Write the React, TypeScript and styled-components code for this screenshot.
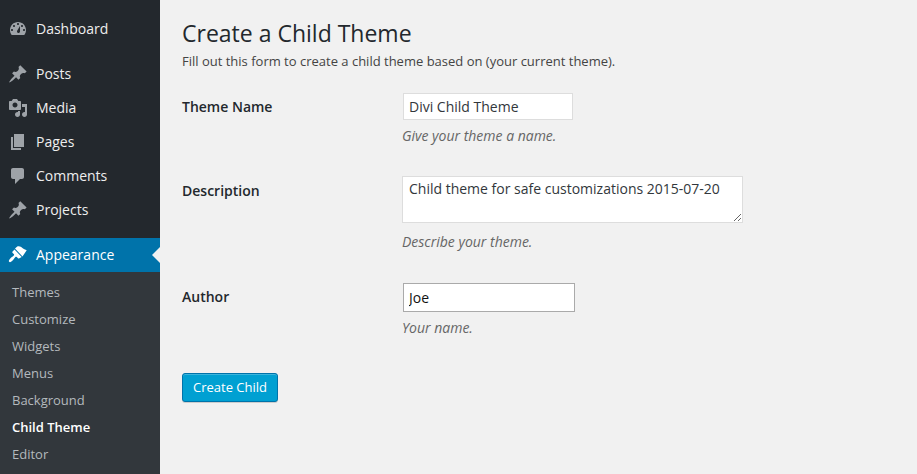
import {createGlobalStyle} from 'styled-components';
import styled from 'styled-components';

const GlobalStyle = createGlobalStyle`
  html, body {
    margin: 0;
    height: 100%;
    overflow: hidden;
    background: #f1f1f1;
    font-family: 'Open Sans', sans-serif;
  }
`;

const Page = styled.div`
  display: flex;
  width: 917px;
  height: 474px;
  overflow: hidden;
`;

const Sidebar = styled.nav`
  width: 160px;
  flex: none;
  background: #23282d;
  padding-top: 12px;
  box-sizing: border-box;
`;

const MenuItem = styled.div<{$gapAfter?: number; $current?: boolean}>`
  position: relative;
  display: flex;
  align-items: center;
  height: 34px;
  margin-bottom: ${({$gapAfter}) => $gapAfter ?? 0}px;
  padding-left: 8px;
  font-size: 14px;
  color: ${({$current}) => ($current ? '#fff' : '#eee')};
  background: ${({$current}) => ($current ? '#0073aa' : 'transparent')};
`;

const MenuIcon = styled.svg<{$current?: boolean}>`
  width: 20px;
  height: 20px;
  margin-right: 8px;
  fill: ${({$current}) => ($current ? '#fff' : '#9ea3a8')};
`;

const MenuLabel = styled.span`
  padding-bottom: 2px;
`;

const Arrow = styled.span`
  position: absolute;
  right: 0;
  top: 9px;
  border: 8px solid transparent;
  border-right-color: #f1f1f1;
  border-left-width: 0;
`;

const SubMenu = styled.div`
  background: #32373c;
  padding: 7px 0 0 12px;
  height: 202px;
`;

const SubItem = styled.div<{$active?: boolean}>`
  height: 27px;
  line-height: 27px;
  font-size: 13px;
  font-weight: ${({$active}) => ($active ? 600 : 400)};
  color: ${({$active}) => ($active ? '#fff' : '#b4b9be')};
`;

const Main = styled.main`
  flex: 1;
  padding: 17px 0 0 22px;
`;

const Title = styled.h1`
  margin: 0;
  font-size: 23px;
  font-weight: 400;
  line-height: 32px;
  color: #23282d;
`;

const Intro = styled.p`
  margin: 3px 0 0;
  font-size: 13px;
  line-height: 18px;
  color: #444;
`;

const FormRow = styled.div<{$height: number}>`
  display: grid;
  grid-template-columns: 220px 1fr;
  height: ${({$height}) => $height}px;
`;

const Fields = styled.div`
  margin-top: 23px;
`;

const Label = styled.label<{$top: number}>`
  padding-top: ${({$top}) => $top}px;
  font-size: 14px;
  font-weight: 600;
  line-height: 20px;
  color: #23282d;
`;

const TextInput = styled.input<{$width: number; $focus?: boolean}>`
  display: block;
  box-sizing: border-box;
  width: ${({$width}) => $width}px;
  height: ${({$focus}) => ($focus ? 29 : 27)}px;
  margin-left: 1px;
  padding: 0 5px;
  border: 1px solid ${({$focus}) => ($focus ? '#aaa' : '#ddd')};
  border-radius: 0;
  outline: none;
  background: #fff;
  font-family: inherit;
  font-size: 14px;
  color: ${({$focus}) => ($focus ? '#111' : '#32373c')};
`;

const TextArea = styled.textarea`
  display: block;
  box-sizing: border-box;
  width: 341px;
  height: 47px;
  padding: 2px 6px;
  border: 1px solid #ddd;
  outline: none;
  background: #fff;
  font-family: inherit;
  font-size: 14px;
  line-height: 20px;
  color: #32373c;
`;

const Hint = styled.p<{$top: number}>`
  margin: ${({$top}) => $top}px 0 0;
  font-size: 14px;
  font-style: italic;
  line-height: 20px;
  color: #666;
`;

const Submit = styled.button`
  display: block;
  box-sizing: border-box;
  width: 96px;
  height: 29px;
  padding: 0 0 2px;
  border: 1px solid #0073aa;
  border-radius: 3px;
  background: #00a0d2;
  box-shadow: inset 0 1px 0 rgba(120, 200, 230, 0.5), 0 1px 0 rgba(0, 0, 0, 0.15);
  font-family: inherit;
  font-size: 13px;
  color: #fff;
`;

const icons: Record<string, string> = {
  dashboard:
    'M3.76 16h12.48c1.1-1.37 1.76-3.11 1.76-5 0-4.42-3.58-8-8-8s-8 3.58-8 8c0 1.89.66 3.63 1.76 5zM10 4c.55 0 1 .45 1 1s-.45 1-1 1-1-.45-1-1 .45-1 1-1zM6 6c.55 0 1 .45 1 1s-.45 1-1 1-1-.45-1-1 .45-1 1-1zm8 0c.55 0 1 .45 1 1s-.45 1-1 1-1-.45-1-1 .45-1 1-1zM9 12l3-5v5.5c0 .8-.7 1.5-1.5 1.5S9 13.3 9 12.5zM4 10c.55 0 1 .45 1 1s-.45 1-1 1-1-.45-1-1 .45-1 1-1zm12 0c.55 0 1 .45 1 1s-.45 1-1 1-1-.45-1-1 .45-1 1-1z',
  pin: 'M10.44 3.02l1.82-1.82 6.36 6.35-1.83 1.82c-1.05-.68-2.48-.57-3.41.36l-.75.75c-.92.93-1.04 2.35-.35 3.41l-1.83 1.82-2.41-2.41-2.8 2.79c-.42.42-3.38 2.71-3.8 2.29s1.86-3.39 2.28-3.81l2.79-2.79L4.1 9.36l1.83-1.82c1.05.69 2.48.57 3.4-.36l.75-.75c.93-.92 1.05-2.35.36-3.41z',
  media:
    'M13 11V4c0-.55-.45-1-1-1h-1.67L9 1H5L3.67 3H2c-.55 0-1 .45-1 1v7c0 .55.45 1 1 1h10c.55 0 1-.45 1-1zM7 4.5c1.38 0 2.5 1.12 2.5 2.5S8.38 9.5 7 9.5 4.5 8.38 4.5 7 5.62 4.5 7 4.5zM14 6h5v10.5c0 1.38-1.12 2.5-2.5 2.5S14 17.88 14 16.5s1.12-2.5 2.5-2.5c.17 0 .34.02.5.05V9h-3V6zm-4 8.05V13h2v3.5c0 1.38-1.12 2.5-2.5 2.5S7 17.88 7 16.5 8.12 14 9.5 14c.17 0 .34.02.5.05z',
  pages: 'M6 15V2h10v13H6zm-1 1h8v2H3V5h2v11z',
  comments:
    'M5 2h9c1.1 0 2 .9 2 2v7c0 1.1-.9 2-2 2h-2l-5 5v-5H5c-1.1 0-2-.9-2-2V4c0-1.1.9-2 2-2z',
  appearance:
    'M7 3.5L9 1.7C10 1 12 1.2 13.2 2C14.5 2.9 15 3.6 16.4 4.3C17.2 4.7 18 5 18.7 5.2L14.5 11.5ZM13.7 12L6.5 4.6L4.6 6.5C4.2 6.9 4.2 7.5 4.6 7.9L5.8 9.1C6.2 9.5 6.2 10.1 5.8 10.5C5.2 11.1 4.3 11.7 3.5 12.3C3.1 12.6 2.8 12.9 2.5 13.2C1.2 14.6 .3 15.9 1.2 16.8C2.1 17.7 3.5 16.6 4.8 15.3C5.1 15 5.4 14.7 5.7 14.3C6.3 13.5 6.8 12.7 7.4 12.1C7.8 11.7 8.4 11.7 8.8 12.1L10 13.3C10.4 13.7 11 13.7 11.4 13.3Z',
};

const subItems = ['Themes', 'Customize', 'Widgets', 'Menus', 'Background', 'Child Theme', 'Editor'];

function Item({icon, label, gapAfter, current}: {icon: string; label: string; gapAfter?: number; current?: boolean}) {
  return (
    <MenuItem $gapAfter={gapAfter} $current={current}>
      <MenuIcon $current={current} viewBox="0 0 20 20">
        <path fillRule="evenodd" d={icons[icon]} />
      </MenuIcon>
      <MenuLabel>{label}</MenuLabel>
      {current && <Arrow />}
    </MenuItem>
  );
}

export default function App() {
  return (
    <Page>
      <GlobalStyle />
      <Sidebar>
        <Item icon="dashboard" label="Dashboard" gapAfter={11} />
        <Item icon="pin" label="Posts" />
        <Item icon="media" label="Media" />
        <Item icon="pages" label="Pages" />
        <Item icon="comments" label="Comments" />
        <Item icon="pin" label="Projects" gapAfter={11} />
        <Item icon="appearance" label="Appearance" current />
        <SubMenu>
          {subItems.map(s => (
            <SubItem key={s} $active={s === 'Child Theme'}>
              {s}
            </SubItem>
          ))}
        </SubMenu>
      </Sidebar>
      <Main>
        <Title>Create a Child Theme</Title>
        <Intro>Fill out this form to create a child theme based on (your current theme).</Intro>
        <Fields>
          <FormRow $height={83}>
            <Label $top={4}>Theme Name</Label>
            <div>
              <TextInput $width={170} defaultValue="Divi Child Theme" />
              <Hint $top={6}>Give your theme a name.</Hint>
            </div>
          </FormRow>
          <FormRow $height={107}>
            <Label $top={5}>Description</Label>
            <div>
              <TextArea defaultValue="Child theme for safe customizations 2015-07-20" />
              <Hint $top={9}>Describe your theme.</Hint>
            </div>
          </FormRow>
          <FormRow $height={90}>
            <Label $top={4}>Author</Label>
            <div>
              <TextInput $width={172} $focus defaultValue="Joe" />
              <Hint $top={6}>Your name.</Hint>
            </div>
          </FormRow>
        </Fields>
        <Submit>Create Child</Submit>
      </Main>
    </Page>
  );
}
